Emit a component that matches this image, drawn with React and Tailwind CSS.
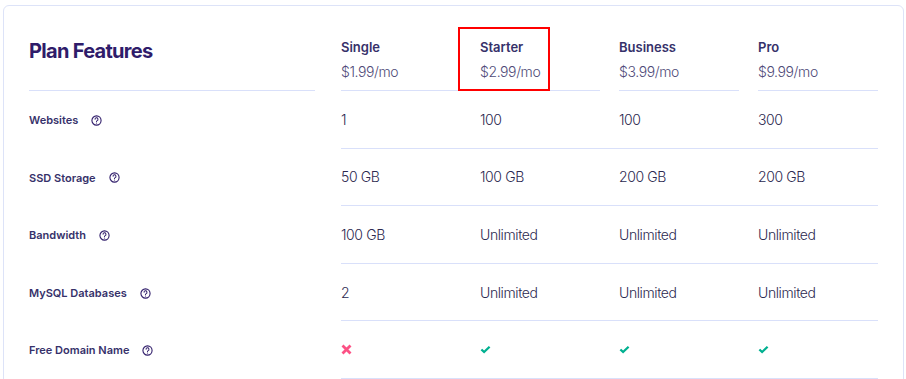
import React from "react";

const plans = [
  { name: "Single", price: "$1.99/mo" },
  { name: "Starter", price: "$2.99/mo" },
  { name: "Business", price: "$3.99/mo" },
  { name: "Pro", price: "$9.99/mo" },
];

const rows = [
  { label: "Websites", values: ["1", "100", "100", "300"] },
  { label: "SSD Storage", values: ["50 GB", "100 GB", "200 GB", "200 GB"] },
  { label: "Bandwidth", values: ["100 GB", "Unlimited", "Unlimited", "Unlimited"] },
  { label: "MySQL Databases", values: ["2", "Unlimited", "Unlimited", "Unlimited"] },
  { label: "Free Domain Name", values: ["x", "v", "v", "v"] },
];

function Help() {
  return (
    <svg width="11" height="11" viewBox="0 0 12 12" className="ml-[13px] shrink-0">
      <circle cx="6" cy="6" r="5" fill="none" stroke="#2f1c6a" strokeWidth="1.2" />
      <path d="M4.4 4.7a1.6 1.6 0 1 1 2.3 1.4c-.5.3-.7.5-.7 1.1" fill="none" stroke="#2f1c6a" strokeWidth="1.1" strokeLinecap="round" />
      <circle cx="6" cy="8.7" r="0.65" fill="#2f1c6a" />
    </svg>
  );
}

function Check() {
  return (
    <svg width="11" height="8" viewBox="0 0 11 8">
      <path d="M0.6 4.2 L2.2 2.7 L4.1 4.5 L8.8 0 L10.4 1.5 L4.1 7.6 Z" fill="#00b090" />
    </svg>
  );
}

function Cross() {
  return (
    <svg width="11" height="11" viewBox="0 0 11 11">
      <path d="M1.5 1.5 L9.5 9.5 M9.5 1.5 L1.5 9.5" stroke="#fc5185" strokeWidth="2.8" strokeLinecap="butt" />
    </svg>
  );
}

function Cell({ v }) {
  if (v === "v") return <Check />;
  if (v === "x") return <Cross />;
  return <span>{v}</span>;
}

export default function App() {
  return (
    <div className="bg-white w-[906px] h-[379px] overflow-hidden font-['Inter',sans-serif]">
      <div className="relative ml-[3px] mt-[5px] w-[901px] h-[400px] border border-[#dde3f8] rounded-[6px] bg-white pl-[25px] pr-[25px]">
        <div className="flex h-[85px]">
          <div className="w-[286px] border-b border-[#d9e0fa] pt-[31px]">
            <h2 className="text-[20px] leading-[28px] font-bold text-[#2f1c6a] tracking-[-0.7px]">Plan Features</h2>
          </div>
          <div className="flex-1 ml-[26px] grid grid-cols-4 gap-x-[19px]">
            {plans.map((p) => (
              <div key={p.name} className="border-b border-[#d9e0fa] pt-[32px]">
                <div className="text-[13px] leading-[18px] font-semibold text-[#36316a]">{p.name}</div>
                <div className="mt-[6px] text-[14px] leading-[20px] font-light text-[#4f4b78] tracking-[-0.4px]">{p.price}</div>
              </div>
            ))}
          </div>
        </div>
        {rows.map((r) => (
          <div key={r.label} className="flex h-[57.6px]">
            <div className="w-[286px] flex items-center pt-[1px] text-[11px] font-semibold text-[#36316a]">
              <span>{r.label}</span>
              <Help />
            </div>
            <div className="flex-1 ml-[26px] grid grid-cols-4 gap-x-[19px] border-b border-[#d9e0fa] text-[14px] font-light text-[#2c2950] tracking-[-0.4px]">
              {r.values.map((v, i) => (
                <div key={i} className="flex items-center">
                  <Cell v={v} />
                </div>
              ))}
            </div>
          </div>
        ))}
        <div className="absolute left-[454px] top-[21px] w-[92px] h-[64px] border-2 border-[#ff0000]" />
      </div>
    </div>
  );
}
